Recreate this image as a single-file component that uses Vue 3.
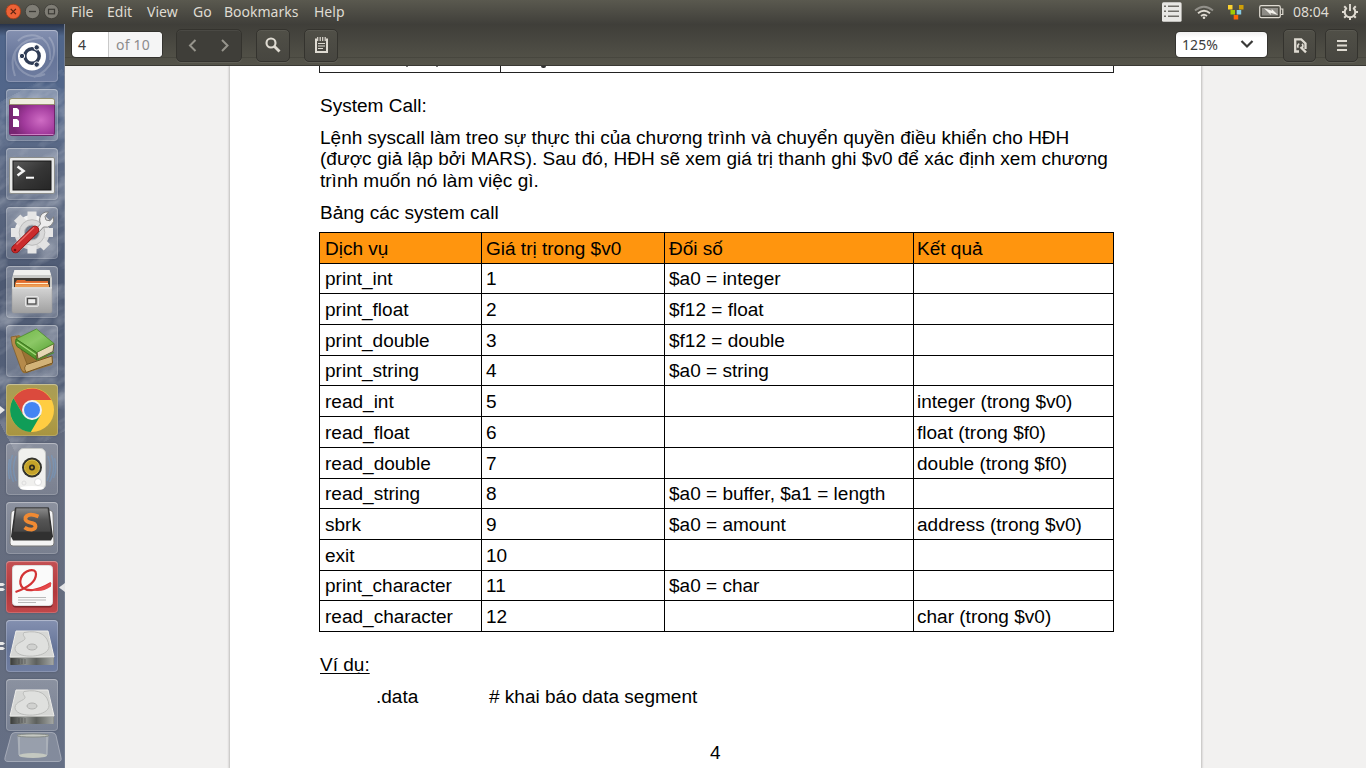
<script setup>
const menus = [
  { label: 'File', w: 36 },
  { label: 'Edit', w: 40 },
  { label: 'View', w: 46 },
  { label: 'Go', w: 31 },
  { label: 'Bookmarks', w: 90 },
  { label: 'Help', w: 40 },
]

const rows = [
  ['print_int', '1', '$a0 = integer', '', 30],
  ['print_float', '2', '$f12 = float', '', 31],
  ['print_double', '3', '$f12 = double', '', 31],
  ['print_string', '4', '$a0 = string', '', 30],
  ['read_int', '5', '', 'integer (trong $v0)', 31],
  ['read_float', '6', '', 'float (trong $f0)', 31],
  ['read_double', '7', '', 'double (trong $f0)', 31],
  ['read_string', '8', '$a0 = buffer, $a1 = length', '', 30],
  ['sbrk', '9', '$a0 = amount', 'address (trong $v0)', 31],
  ['exit', '10', '', '', 31],
  ['print_character', '11', '$a0 = char', '', 30],
  ['read_character', '12', '', 'char (trong $v0)', 31],
]

const apps = [
  { id: 'dash', cls: 'blue' },
  { id: 'desktop' },
  { id: 'terminal' },
  { id: 'settings' },
  { id: 'files' },
  { id: 'books' },
  { id: 'chrome', cls: 'gold', pips: 1 },
  { id: 'speaker' },
  { id: 'sublime' },
  { id: 'evince', cls: 'red', pips: 2, active: true },
  { id: 'disk', cls: 'blue', pips: 2 },
  { id: 'disk' },
]
</script>

<template>
  <div class="screen">
    <svg class="defs" width="0" height="0">
      <defs>
        <radialGradient id="glow" cx=".7" cy=".58" r=".65">
          <stop offset="0" stop-color="#cf6cc4" /><stop offset=".6" stop-color="#a13a9c" /><stop offset="1" stop-color="#782673" />
        </radialGradient>
        <linearGradient id="metal" x1="0" y1="0" x2="0" y2="1">
          <stop offset="0" stop-color="#d4d4d4" /><stop offset="1" stop-color="#a0a0a0" />
        </linearGradient>
        <linearGradient id="gear" x1="0" y1="0" x2="0" y2="1">
          <stop offset="0" stop-color="#f4f4f4" /><stop offset="1" stop-color="#d2d2d2" />
        </linearGradient>
        <linearGradient id="term" x1="0" y1="0" x2="1" y2="1">
          <stop offset="0" stop-color="#5a5a5a" /><stop offset=".5" stop-color="#363636" /><stop offset="1" stop-color="#262626" />
        </linearGradient>
        <linearGradient id="edge" x1="0" y1="0" x2="1" y2="0">
          <stop offset="0" stop-color="#3a3c3a" /><stop offset=".35" stop-color="#8e918e" /><stop offset=".6" stop-color="#5d605d" /><stop offset="1" stop-color="#a5a8a5" />
        </linearGradient>
        <linearGradient id="green" x1="0" y1="0" x2="1" y2="1">
          <stop offset="0" stop-color="#6fb548" /><stop offset=".5" stop-color="#8cc866" /><stop offset="1" stop-color="#5aa336" />
        </linearGradient>
        <linearGradient id="slate" x1="0" y1="0" x2="0" y2="1">
          <stop offset="0" stop-color="#8b8b8b" /><stop offset=".5" stop-color="#555" /><stop offset="1" stop-color="#454545" />
        </linearGradient>
      </defs>
    </svg>

    <header class="panel">
      <div class="winbtns">
        <svg width="60" height="24" viewBox="0 0 60 24">
          <circle cx="13.3" cy="11.5" r="7.3" fill="#ed6236" stroke="#a93d17" stroke-width=".8" />
          <path d="M10.7 8.9l5.2 5.2M15.9 8.9l-5.2 5.2" stroke="#5b2412" stroke-width="1.3" />
          <circle cx="32.5" cy="11.5" r="7.2" fill="#7f7d75" stroke="#3c3b36" stroke-width=".8" />
          <path d="M29 11.5h7" stroke="#3c3b36" stroke-width="1.3" />
          <circle cx="51.5" cy="11.5" r="7.2" fill="#7f7d75" stroke="#3c3b36" stroke-width=".8" />
          <rect x="48.5" y="9.3" width="6" height="4.5" fill="none" stroke="#3c3b36" stroke-width="1.2" />
        </svg>
      </div>
      <nav class="menus">
        <span v-for="m in menus" :key="m.label" :style="{ width: m.w + 'px' }">{{ m.label }}</span>
      </nav>
      <div class="tray">
        <svg width="133" height="24" viewBox="1160 0 133 24">
          <rect x="1162" y="2.3" width="19.6" height="19.4" rx="1.5" fill="#e9e8e4" />
          <path d="M1164 6.3h2M1168 6.3h11M1164 11.3h2M1168 11.3h11M1164 16.3h2M1168 16.3h11" stroke="#706e67" stroke-width="1.5" />
          <g fill="none">
            <path d="M1195 10.5q8.8-7.5 18 0" stroke="#92908a" stroke-width="1.8" />
            <path d="M1198 13.3q6-5 12 0" stroke="#dfdbd2" stroke-width="1.9" />
            <path d="M1201 16q3-2.6 6 0" stroke="#dfdbd2" stroke-width="1.8" />
          </g>
          <circle cx="1204" cy="17.7" r="1.3" fill="#dfdbd2" />
          <rect x="1228" y="5" width="4.5" height="4.5" fill="#fcd230" /><rect x="1239" y="5" width="4.5" height="4.5" fill="#cf9f06" />
          <rect x="1230.5" y="10" width="4.5" height="4.5" fill="#a1c904" /><rect x="1236.7" y="10" width="4.5" height="4.5" fill="#88cbe3" />
          <rect x="1233.7" y="15" width="4.5" height="4.5" fill="#fc6502" />
          <rect x="1259.7" y="5.7" width="20.6" height="12" rx="1.6" fill="none" stroke="#dfdbd2" stroke-width="1.2" />
          <rect x="1262" y="8" width="16" height="7.5" fill="#8e8c86" />
          <path d="M1281 9h1.8v5.5h-1.8" fill="none" stroke="#dfdbd2" stroke-width="1.2" />
          <path d="M1264 8.2l8 2.5-.5-2 6.5 6.3-7.5-2.2.5 2.2z" fill="#f2f0ea" />
        </svg>
        <span class="clock">08:04</span>
        <svg width="18" height="24" viewBox="1341 0 18 24">
          <g fill="none" stroke="#dfdbd2">
            <path d="M1346.8 7.8a5.3 5.3 0 1 0 6.4 0" stroke-width="2.1" />
            <path d="M1350 4v7" stroke-width="1.9" />
            <path d="M1346 8l-1.8-1.8M1344.5 12h-2.5M1346 16l-1.8 1.8M1350 17.5v2.5M1354 16l1.8 1.8M1355.5 12h2.5M1354 8l1.8-1.8" stroke-width="2" />
          </g>
        </svg>
      </div>
    </header>

    <div class="body">
      <aside class="launcher">
        <svg class="wall" width="65" height="744" viewBox="0 0 65 744">
          <filter id="rock" x="0" y="0" width="1" height="1">
            <feTurbulence type="fractalNoise" baseFrequency=".03 .06" numOctaves="4" seed="8" />
            <feColorMatrix values="0 0 0 0 .72  0 0 0 0 .75  0 0 0 0 .8  2.4 0 0 0 -1.05" />
          </filter>
          <g class="strata"><rect x="-80" y="80" width="220" height="320" filter="url(#rock)" /></g>
        </svg>
        <div v-for="(a, i) in apps" :key="i" class="tile" :class="a.cls">
          <span v-if="a.pips" class="pips"><i v-for="n in a.pips" :key="n" /></span>
          <span v-if="a.active" class="arrow" />
          <svg viewBox="0 0 52 52" width="52" height="52">
            <g v-if="a.id === 'dash'">
              <g fill="none" stroke="#fff" stroke-opacity=".2" stroke-width="2">
                <path d="M9 46C1 23 14 8 37 8M43 7c11 14 3 33-15 40M12 11C22 0 47 4 44 30M39 44C24 52 6 38 9 23" />
              </g>
              <circle cx="26" cy="26.5" r="14" fill="#fff" />
              <circle cx="26" cy="26" r="7.2" fill="none" stroke="#2f3c55" stroke-width="3.4" />
              <circle cx="16" cy="26" r="2.7" fill="#2f3c55" stroke="#fff" stroke-width="1" />
              <circle cx="30.7" cy="17.4" r="2.7" fill="#2f3c55" stroke="#fff" stroke-width="1" />
              <circle cx="30.7" cy="34.6" r="2.7" fill="#2f3c55" stroke="#fff" stroke-width="1" />
            </g>
            <g v-else-if="a.id === 'desktop'">
              <rect x="3.5" y="10" width="45" height="36.5" rx="2.5" fill="url(#glow)" stroke="#6b2667" />
              <path d="M3.5 15.5v-4q0-2 2.5-2h40q2.5 0 2.5 2v4z" fill="#efeee0" stroke="#8d8c60" stroke-width=".8" />
              <path d="M7 19h4l2 2v6H7zM7 30h4l2 2v6H7z" fill="#fff" />
              <path d="M4.5 45.5h43" stroke="#e2a1d9" stroke-opacity=".7" />
            </g>
            <g v-else-if="a.id === 'terminal'">
              <rect x="3.5" y="9.5" width="45" height="36" rx="1.5" fill="#e8e9e8" stroke="#8b8d8b" />
              <rect x="7" y="13" width="38" height="29" fill="url(#term)" stroke="#161616" />
              <path d="M11.5 18.5l6 4.5-6 4.5" fill="none" stroke="#f4f4f4" stroke-width="2.6" />
              <path d="M20 29.7h8" stroke="#fff" stroke-width="2" />
            </g>
            <g v-else-if="a.id === 'settings'">
              <circle cx="26" cy="25.5" r="13" fill="none" stroke="url(#gear)" stroke-width="9" />
              <path d="M21.5 4.5h9v9h-9zM21.5 37.5h9v9h-9zM5 21h9v9H5zM38 21h9v9h-9z" fill="#e6e6e6" />
              <g transform="rotate(45 26 25.5)"><path d="M21.5 4.5h9v9h-9zM21.5 37.5h9v9h-9zM5 21h9v9H5zM38 21h9v9h-9z" fill="#e2e2e2" /></g>
              <circle cx="26" cy="25.5" r="12.8" fill="#d9d9d9" stroke="#bcbcbc" stroke-width="1" />
              <circle cx="26" cy="25.5" r="7.5" fill="#70788a" stroke="#b8b8b8" stroke-width="1" />
              <path d="M29 23l5.5-6q-2.5-6.5 2-10.500 2.500-2 6-1.500l-3.500 4.500 1 3.500 4 .8 3.500-4q1.500 5-2.500 8.700-3.200 2.500-7.500 1.500l-5 5.500z" fill="#ededed" stroke="#777" stroke-width=".9" />
              <path d="M9.5 42L29 23" stroke="#8c1212" stroke-width="8.5" stroke-linecap="round" />
              <path d="M9.5 42L29 23" stroke="#cb2b2c" stroke-width="7" stroke-linecap="round" />
              <path d="M10.5 37.5L28 20.5" stroke="#ed6c68" stroke-width="1.4" />
              <circle cx="9" cy="43" r="1.3" fill="#741010" />
            </g>
            <g v-else-if="a.id === 'files'">
              <path d="M8.5 4h35l2.5 8v10H6V12z" fill="#c9cac8" />
              <path d="M8.5 4h35l1.500 5H7z" fill="#f0f0ee" />
              <rect x="8" y="12" width="36" height="11" fill="#403b35" />
              <path d="M11 14h8l1 1h22v8H9v-6z" fill="#e06a2d" /><path d="M10 17.5h32" stroke="#fff0cd" stroke-width="1.2" /><path d="M9 18.5h34v3.500H9z" fill="#ee9d52" />
              <path d="M6 21.5h40v23.500q0 2-2 2H8q-2 0-2-2z" fill="url(#metal)" stroke="#999" stroke-width=".5" />
              <path d="M6 21.8h40" stroke="#eee" />
              <rect x="19.5" y="30.5" width="13" height="10" rx="1.5" fill="#c7c7c7" stroke="#e4e4e4" />
              <rect x="21.5" y="32.5" width="8.5" height="5.5" fill="#eee" stroke="#4c4c4c" stroke-width="1.3" />
            </g>
            <g v-else-if="a.id === 'books'">
              <path d="M5 12l8-2 34 26-1 4-26 8q-4 1-5-4z" fill="#9a7335" />
              <path d="M19 40l27-9 .5 7L20 47.500q-3-3.500-1-7.500z" fill="#d3b378" stroke="#745423" />
              <path d="M5 12l5-1 11 28q-4 3-1 8-3 1-5-3L6 19z" fill="#b58a4b" stroke="#76531f" stroke-width=".6" />
              <path d="M31 27l17-8.500-1 8L32 34z" fill="#e5d7b4" stroke="#635838" />
              <path d="M10 14L30.5 4 48 18.500 30.500 27.500z" fill="url(#green)" stroke="#4c8c2c" stroke-width=".8" />
              <path d="M10 14q-1.500 4 1 7.500L31 35q-2-4-.5-7.500z" fill="#55992f" stroke="#356e1b" stroke-width=".8" />
              <path d="M11 17l19 13" stroke="#a8db7c" stroke-width="1.3" />
              <path d="M31 35l17-7.500" stroke="#4c8c2c" stroke-width="1.3" />
            </g>
            <g v-else-if="a.id === 'chrome'">
              <circle cx="26" cy="26" r="22" fill="#ffcd42" />
              <path d="M26 26L7.5 14.300A22 22 0 0 1 45.200 16H26z" fill="#db4a3d" />
              <path d="M17.3 31L7.500 14.300 26 16v10z" fill="#db4a3d" />
              <path d="M7.5 14.300L17.300 31 26 36l8.700-5-9.900 17A22 22 0 0 1 7.500 14.300z" fill="#109d58" />
              <circle cx="26" cy="26" r="10" fill="#f1f1f1" /><circle cx="26" cy="26" r="8" fill="#4384f3" />
            </g>
            <g v-else-if="a.id === 'speaker'">
              <g fill="none" stroke="#6aa2dd" stroke-opacity=".35" stroke-width="1.5">
                <path d="M10 13q-5 12 0 25M6.500 12q-5 14 1 27M3.500 16q-2 10 0 20M42 13q5 12-1 25M45.500 12q5 14-2 27M48.500 15q3 11-1 20" />
              </g>
              <rect x="12.5" y="5.5" width="27" height="41" rx="5" fill="#f0f0ee" stroke="#c5c7c5" />
              <ellipse cx="26" cy="45" rx="12" ry="2" fill="#fff" />
              <circle cx="26" cy="24.5" r="10" fill="#34342d" />
              <circle cx="26" cy="24.5" r="7.5" fill="#c5a229" stroke="#e3c84b" stroke-width="1" />
              <circle cx="26" cy="24.5" r="3" fill="#2e2b20" /><circle cx="26" cy="24.5" r="1.2" fill="#bd982b" />
              <circle cx="32" cy="39" r="3.5" fill="#fff" stroke="#ddd" /><circle cx="18" cy="40" r="2" fill="none" stroke="#ddd" />
            </g>
            <g v-else-if="a.id === 'sublime'">
              <path d="M5 12q0-4 5-4h32q5 0 5 4l1 29q0 3-3 3H7q-3 0-3-3z" fill="#f4f4f4" stroke="#777" />
              <path d="M9 5.500h34l4 29-2 4H7l-2-4z" fill="#303030" />
              <path d="M10 6h32l3 24H7z" fill="url(#slate)" stroke="#333" stroke-width=".7" />
              <path d="M32.5 14.500q-10-4-13 1-1 4 5 5.200c7 1 6 6 1 7q-4 0-7-2.200" fill="none" stroke="#f08a33" stroke-width="3.8" />
            </g>
            <g v-else-if="a.id === 'evince'">
              <rect x="6.5" y="5" width="40" height="41.5" rx="3" fill="#5c1a1e" opacity=".7" />
              <rect x="6.5" y="4.5" width="40" height="40" rx="3" fill="#fafafa" stroke="#ddd" />
              <path d="M9.5 31C18 28 30 22 30 13c0-7-12-4-15 4-3 9 4 13 12 12 8-1 13-4 18-7" fill="none" stroke="#d33335" stroke-width="2.2" />
              <path d="M24 28.500q12-.5 21-7v4q-9 6-17 4z" fill="#e5484a" />
              <path d="M12 36.500h28M12 39h28M12 41.500h18" stroke="#b9b9b9" stroke-width="1" />
            </g>
            <g v-else>
              <path d="M10 11h32l6 25v8q0 1-1 1H5q-1 0-1-1v-8z" fill="#777975" />
              <path d="M10 11h32l6 26H4z" fill="#d6d7d5" stroke="#ededeb" />
              <path d="M4.5 38h43v7h-43z" fill="url(#edge)" />
              <path d="M13 39v5M16 39v5M19 39v5" stroke="#383a37" stroke-opacity=".5" />
              <path d="M18 12.500c16-3 24 3 25 14 0 12-34 13-34 2 0-6 10-7 10-10 0-2-3-3-1-6z" fill="#dfe0de" stroke="#b8b9b7" stroke-width=".9" />
              <ellipse cx="26" cy="27" rx="5" ry="3" fill="#d0d1cf" stroke="#b1b2b0" />
            </g>
          </svg>
        </div>
        <svg class="trash" width="58" height="32" viewBox="0 0 58 32">
          <path d="M11 .5h37q3 0 4 3l5 22q1 4-3 4H4q-4 0-3-4l6-22q1-3 4-3z" fill="#fff" fill-opacity=".2" stroke="#c3c7d1" stroke-opacity=".6" />
          <path d="M13 3h32l-2 21q-14 3-28 0z" fill="#d8dcda" fill-opacity=".25" />
          <path d="M15 5v18M43 5v18" stroke="#e0e3df" stroke-opacity=".5" />
          <ellipse cx="29" cy="3.5" rx="16" ry="1.6" fill="#c5c8c2" stroke="#868b87" />
          <ellipse cx="29" cy="23.5" rx="14" ry="2.5" fill="#c9ccc2" fill-opacity=".9" />
        </svg>
      </aside>

      <main class="app">
        <div class="toolbar">
          <div class="pagebox"><span class="cur">4</span><span class="total">of 10</span></div>
          <div class="btn nav">
            <svg width="64" height="32" viewBox="0 0 64 32"><path d="M18.500 11l-5.500 5.500 5.500 5.500M45 11l5.500 5.500-5.500 5.500" fill="none" stroke="#96948c" stroke-width="2" /></svg>
          </div>
          <div class="btn find">
            <svg width="32" height="32" viewBox="0 0 32 32"><circle cx="14" cy="14" r="4.5" fill="none" stroke="#dfdbd2" stroke-width="2.1" /><path d="M17 17l5.500 5.500" stroke="#dfdbd2" stroke-width="2.8" /></svg>
          </div>
          <div class="btn note">
            <svg width="32" height="32" viewBox="0 0 32 32">
              <path d="M11 9.500v13.500h11V9.500" fill="none" stroke="#dfdbd2" stroke-width="2" />
              <path d="M12.700 8v4M15.200 8v4M17.700 8v4M20.200 8v4" stroke="#dfdbd2" stroke-width="1.2" />
              <path d="M13 14.500h7M13 17h7M13 19.500h5" stroke="#dfdbd2" stroke-width="1.1" />
            </svg>
          </div>
          <div class="spacer" />
          <div class="zoombox"><span>125%</span><svg width="14" height="10" viewBox="0 0 14 10"><path d="M1.500 1l5.500 5.500L12.500 1" fill="none" stroke="#3a3a38" stroke-width="2.2" /></svg></div>
          <div class="btn doc">
            <svg width="32" height="32" viewBox="0 0 32 32">
              <path d="M15 22.500H11.200V10.300H17.200l4.300 4.200V20" fill="none" stroke="#dfdbd2" stroke-width="2.3" />
              <path d="M14.300 18.800a2.600 2.600 0 0 1 1-4M18 14.900a2.600 2.600 0 0 1-1 4.500" fill="none" stroke="#dfdbd2" stroke-width="1.7" />
              <path d="M16.500 18l5.500 5.300" stroke="#dfdbd2" stroke-width="2.4" />
            </svg>
          </div>
          <div class="btn menu">
            <svg width="32" height="32" viewBox="0 0 32 32"><path d="M11 12h10M11 16.500h10M11 21h10" stroke="#dfdbd2" stroke-width="2" /></svg>
          </div>
        </div>

        <div class="canvas">
          <article class="page">
            <div class="prevtable"><div class="c1"><i /><i /></div><div class="c2"><i /></div></div>
            <p class="first">System Call:</p>
            <p class="para">Lệnh syscall làm treo sự thực thi của chương trình và chuyển quyền điều khiển cho HĐH<br>(được giả lập bởi MARS). Sau đó, HĐH sẽ xem giá trị thanh ghi $v0 để xác định xem chương<br>trình muốn nó làm việc gì.</p>
            <p class="caption">Bảng các system call</p>
            <div class="table">
              <div class="row head"><span>Dịch vụ</span><span>Giá trị trong $v0</span><span>Đối số</span><span>Kết quả</span></div>
              <div v-for="r in rows" :key="r[0]" class="row" :style="{ height: r[4] + 'px', lineHeight: (r[4] === 31 ? 31 : 29) + 'px' }">
                <span v-for="n in 4" :key="n">{{ r[n - 1] }}</span>
              </div>
            </div>
            <p class="example">Ví dụ:</p>
            <p class="code"><span>.data</span><span># khai báo data segment</span></p>
            <p class="num">4</p>
          </article>
        </div>
      </main>
    </div>
  </div>
</template>

<style>
html, body { margin: 0; overflow: hidden; }
</style>

<style scoped>
* { box-sizing: border-box; }
.screen { width: 1366px; height: 768px; overflow: hidden; display: flex; flex-direction: column; font-family: "Noto Sans", "Open Sans", sans-serif; position: relative; }
.defs { position: absolute; }
.panel { height: 24px; flex: none; display: flex; background: linear-gradient(#5a594f, #403f3a); color: #dfdbd2; font-size: 14px; line-height: 24px; }
.winbtns { width: 71px; }
.winbtns svg, .tray svg { display: block; flex: none; }
.menus { display: flex; flex: 1; }
.menus span { white-space: nowrap; }
.tray { display: flex; width: 206px; }
.clock { width: 48px; white-space: nowrap; }
.body { flex: 1; display: flex; min-height: 0; }
.launcher { width: 65px; flex: none; position: relative; padding: 6px 0 0 6px; display: flex; flex-direction: column; gap: 7px; background: linear-gradient(#283349, #50668b 12px, #52668a 70px, #5d6a84 150px, #4d5972 260px, #556179 370px, #666d7f 430px, #646c7e 600px, #656f85); border-right: 1px solid #747e91; }
.wall { position: absolute; left: 0; top: 0; opacity: .4; }
.strata { transform: rotate(-28deg); transform-origin: 32px 220px; }
.tile { width: 52px; height: 52px; flex: none; position: relative; border-radius: 4px; background: linear-gradient(rgba(255,255,255,.25), rgba(255,255,255,.13)); box-shadow: inset 0 0 0 1px rgba(255,255,255,.18), inset 0 1px 1px rgba(255,255,255,.25), 0 0 2px rgba(20,30,50,.35); }
.tile > svg { display: block; }
.tile.blue { background: linear-gradient(#8490b0, #667599 55%, #6f7da0); }
.tile.gold { background: linear-gradient(#a89c55, #b1a04d 50%, #a89440); }
.tile.red { background: linear-gradient(#c35053, #b2383c 60%, #c1474a); }
.pips { position: absolute; left: -6px; top: 22px; display: flex; flex-direction: column; gap: 2px; }
.pips i { width: 5px; height: 3px; background: #e8e8e8; clip-path: polygon(0 0, 60% 0, 100% 50%, 60% 100%, 0 100%); }
.gold .pips i { height: 8px; clip-path: polygon(0 0, 100% 50%, 0 100%); }
.arrow { position: absolute; left: 53px; top: 22px; width: 6px; height: 9px; background: #e4e4e6; clip-path: polygon(100% 0, 0 50%, 100% 100%); }
.trash { flex: none; margin: -6px 0 0 -2px; }
.app { flex: 1; display: flex; flex-direction: column; min-width: 0; }
.toolbar { height: 42px; flex: none; display: flex; padding: 4px 8px 0 7px; background: linear-gradient(transparent 33px, rgba(25,25,20,.35) 33px, transparent 34px), linear-gradient(#3f3e39, #55544a); border-bottom: 1px solid #3a3934; color: #3c3c3c; font-size: 14px; }
.pagebox { width: 90px; height: 25px; margin-top: 4px; border-radius: 4px; display: flex; background: #fff; box-shadow: 0 0 0 1px #34332f; line-height: 25px; }
.cur { width: 37px; padding-left: 6px; border-right: 1px solid #c9c9c9; }
.total { padding-left: 7px; flex: 1; color: #8c8c8c; background: #f5f5f5; border-radius: 0 4px 4px 0; white-space: nowrap; letter-spacing: .2px; }
.btn { height: 33px; margin-top: 1px; border: 1px solid #34332e; border-radius: 5px; background: linear-gradient(#504f47, #474640); box-shadow: 0 1px 0 rgba(255,255,255,.08), inset 0 1px 0 rgba(255,255,255,.06); }
.btn svg { display: block; margin-top: -1px; }
.btn.nav { width: 66px; margin-left: 14px; background: #3f3e39; }
.btn.find, .btn.note { width: 34px; margin-left: 14px; }
.spacer { flex: 1; }
.zoombox { width: 91px; height: 25px; margin-top: 4px; border-radius: 4px; background: linear-gradient(#f0f0f0, #fff 6px); box-shadow: 0 0 0 1px #34332f; display: flex; align-items: center; justify-content: space-between; padding: 0 13px 0 6px; letter-spacing: .1px; }
.btn.doc { width: 33px; margin-left: 16px; }
.btn.menu { width: 33px; margin-left: 9px; }
.canvas { flex: 1; min-height: 0; background: #f2f1f0; padding-left: 165px; overflow: hidden; }
.page { width: 971px; height: 702px; background: #fff; padding-left: 89px; box-shadow: 0 0 2px 1px #bdbcba; font-family: "Liberation Sans", Arial, sans-serif; font-size: 19.02px; line-height: 21.5px; color: #000; }
.page p { margin: 0 0 0 1px; white-space: nowrap; }
.prevtable { width: 795px; height: 7px; border: solid #222; border-width: 0 1px 1px; display: flex; }
.prevtable .c1 { width: 181px; border-right: 1px solid #222; display: flex; padding-left: 86px; gap: 28px; }
.prevtable i { width: 2px; height: 1px; background: #777; }
.prevtable .c2 { padding-left: 40px; }
.prevtable .c2 i { display: block; width: 5px; height: 2px; background: #333; border-radius: 0 0 3px 3px; }
.page .first { margin-top: 22px; }
.page .para { margin-top: 10.3px; }
.page .caption { margin-top: 10.7px; }
.table { width: 795px; margin-top: 8.5px; border-top: 1px solid #000; border-left: 1px solid #000; }
.row { display: grid; grid-template-columns: 162px 183px 249px 200px; grid-template-rows: 100%; height: 31px; line-height: 31px; }
.row.head { height: 31px; }
.row span { min-height: 0; height: 100%; border-right: 1px solid #000; border-bottom: 1px solid #000; padding-left: 5px; white-space: nowrap; }
.row span:nth-child(2), .row span:nth-child(3) { padding-left: 4px; }
.row span:nth-child(4) { padding-left: 3px; }
.head { background: #ff950e; }
.page .example { margin-top: 22px; text-decoration: underline; text-decoration-thickness: 1px; text-underline-offset: 2px; text-decoration-skip-ink: none; }
.page .code { margin-top: 10.5px; display: grid; grid-template-columns: 113px auto; padding-left: 56px; }
.page .num { margin-top: 34.5px; padding-left: 390px; }
</style>
